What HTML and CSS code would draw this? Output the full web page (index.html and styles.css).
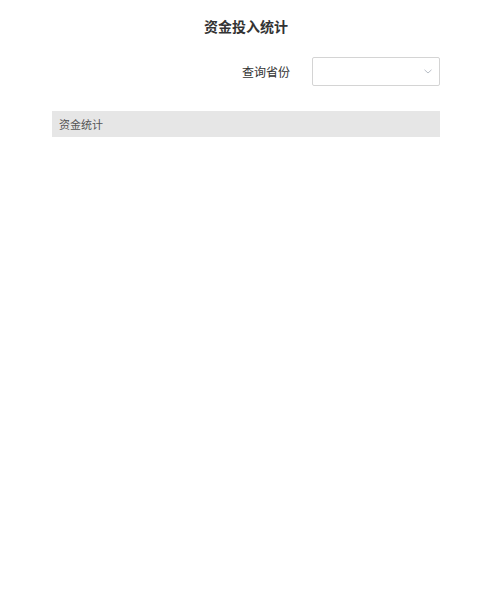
FILE: index.html
```html
<!DOCTYPE html>
<html lang="zh">
<head>
<meta charset="utf-8">
<title>资金投入统计</title>
<link rel="stylesheet" href="styles.css">
</head>
<body>
<div class="page">
  <h1 class="title">资金投入统计</h1>
  <div class="query-row">
    <label class="query-label">查询省份</label>
    <div class="select">
      <svg class="chevron" width="8" height="5" viewBox="0 0 8 5"><path d="M0.5 0.8 L4 4 L7.5 0.8" fill="none" stroke="#b8bec6" stroke-width="1"/></svg>
    </div>
  </div>
  <div class="section-bar">资金统计</div>
</div>
</body>
</html>
```

FILE: styles.css
```css
html, body {
  margin: 0;
  padding: 0;
  background: #ffffff;
}
body {
  font-family: "Noto Sans CJK SC", "Noto Sans", sans-serif;
  color: #333333;
}
.page {
  width: 388px;
  margin-left: 52px;
  padding-top: 16px;
}
.title {
  margin: 0;
  font-size: 14px;
  line-height: 20px;
  font-weight: bold;
  text-align: center;
  color: #333333;
}
.query-row {
  display: flex;
  justify-content: flex-end;
  align-items: center;
  gap: 22px;
  margin-top: 21px;
}
.query-label {
  font-size: 12px;
  line-height: 20px;
  color: #333333;
}
.select {
  box-sizing: border-box;
  width: 128px;
  height: 29px;
  border: 1px solid #d4d4d4;
  border-radius: 2px;
  display: flex;
  justify-content: flex-end;
  align-items: center;
  padding-right: 7px;
  background: #fff;
}
.chevron {
  display: block;
}
.section-bar {
  margin-top: 25px;
  height: 26px;
  line-height: 26px;
  background: #e6e6e6;
  font-size: 11px;
  color: #555555;
  padding-left: 7px;
}
```
